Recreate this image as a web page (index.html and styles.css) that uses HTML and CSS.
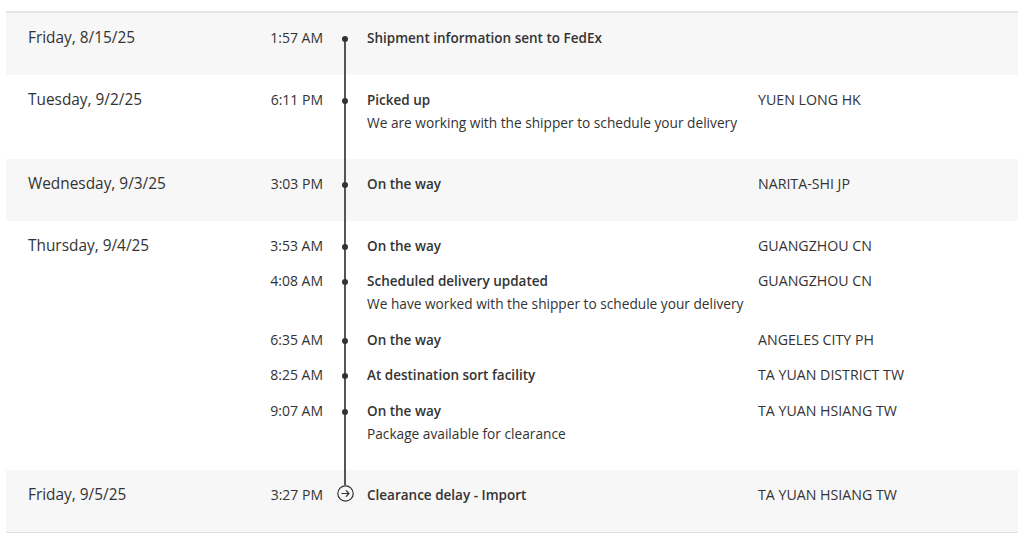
FILE: index.html
```html
<!DOCTYPE html>
<html>
<head>
<meta charset="utf-8">
<link rel="stylesheet" href="styles.css">
</head>
<body>
<div class="history">
  <div class="day shaded">
    <div class="date">Friday, 8/15/25</div>
    <div class="events">
      <div class="event">
        <div class="time">1:57 AM</div>
        <div class="marker"><span class="dot"></span></div>
        <div class="desc"><div class="title">Shipment information sent to FedEx</div></div>
        <div class="loc"></div>
      </div>
    </div>
  </div>
  <div class="day">
    <div class="date">Tuesday, 9/2/25</div>
    <div class="events">
      <div class="event">
        <div class="time">6:11 PM</div>
        <div class="marker"><span class="dot"></span></div>
        <div class="desc"><div class="title">Picked up</div><div class="sub">We are working with the shipper to schedule your delivery</div></div>
        <div class="loc">YUEN LONG HK</div>
      </div>
    </div>
  </div>
  <div class="day shaded">
    <div class="date">Wednesday, 9/3/25</div>
    <div class="events">
      <div class="event">
        <div class="time">3:03 PM</div>
        <div class="marker"><span class="dot"></span></div>
        <div class="desc"><div class="title">On the way</div></div>
        <div class="loc">NARITA-SHI JP</div>
      </div>
    </div>
  </div>
  <div class="day">
    <div class="date">Thursday, 9/4/25</div>
    <div class="events">
      <div class="event">
        <div class="time">3:53 AM</div>
        <div class="marker"><span class="dot"></span></div>
        <div class="desc"><div class="title">On the way</div></div>
        <div class="loc">GUANGZHOU CN</div>
      </div>
      <div class="event">
        <div class="time">4:08 AM</div>
        <div class="marker"><span class="dot"></span></div>
        <div class="desc"><div class="title">Scheduled delivery updated</div><div class="sub">We have worked with the shipper to schedule your delivery</div></div>
        <div class="loc">GUANGZHOU CN</div>
      </div>
      <div class="event">
        <div class="time">6:35 AM</div>
        <div class="marker"><span class="dot"></span></div>
        <div class="desc"><div class="title">On the way</div></div>
        <div class="loc">ANGELES CITY PH</div>
      </div>
      <div class="event">
        <div class="time">8:25 AM</div>
        <div class="marker"><span class="dot"></span></div>
        <div class="desc"><div class="title">At destination sort facility</div></div>
        <div class="loc">TA YUAN DISTRICT TW</div>
      </div>
      <div class="event">
        <div class="time">9:07 AM</div>
        <div class="marker"><span class="dot"></span></div>
        <div class="desc"><div class="title">On the way</div><div class="sub">Package available for clearance</div></div>
        <div class="loc">TA YUAN HSIANG TW</div>
      </div>
    </div>
  </div>
  <div class="day shaded last">
    <div class="date">Friday, 9/5/25</div>
    <div class="events">
      <div class="event">
        <div class="time">3:27 PM</div>
        <div class="marker">
          <svg class="arrow-icon" width="17" height="17" viewBox="0 0 17 17"><circle cx="8.5" cy="8.5" r="7.7" fill="#f7f7f7" stroke="#333" stroke-width="1.2"/><path d="M4.8 8.5h7M9.2 5.7l2.8 2.8-2.8 2.8" fill="none" stroke="#333" stroke-width="1.2" stroke-linecap="round" stroke-linejoin="round"/></svg>
        </div>
        <div class="desc"><div class="title">Clearance delay - Import</div></div>
        <div class="loc">TA YUAN HSIANG TW</div>
      </div>
    </div>
  </div>
</div>
</body>
</html>
```
FILE: styles.css
```css
html, body {
  margin: 0;
  padding: 0;
  background: #fff;
}
body {
  padding: 11px 6px 0 6px;
  font-family: "Open Sans", "Noto Sans", sans-serif;
  color: #333;
  font-size: 13.7px;
}
.history {
  position: relative;
  border-top: 2px solid #e6e6e6;
  border-bottom: 1px solid #dedede;
}
.history::before {
  content: "";
  position: absolute;
  left: 338px;
  top: 27px;
  bottom: 47px;
  width: 2px;
  background: #555;
}
.day {
  display: flex;
  padding: 14px 0 0 22px;
}
.day.shaded {
  background: #f7f7f7;
}
.date {
  width: 222px;
  flex: none;
  font-size: 15.4px;
  line-height: 22px;
}
.events {
  flex: 1;
  display: flex;
  flex-direction: column;
}
.event {
  display: grid;
  grid-template-columns: 73px 44px 391px 1fr;
  padding-bottom: 13.5px;
}
.day .event:last-child {
  padding-bottom: 25.5px;
}
.time {
  text-align: right;
  line-height: 22px;
  font-size: 14px;
}
.marker {
  height: 22px;
  display: flex;
  align-items: center;
  justify-content: center;
  position: relative;
  z-index: 1;
}
.dot {
  width: 6px;
  height: 6px;
  border-radius: 50%;
  background: #333;
  margin-top: 2px;
}
.arrow-icon {
  display: block;
  margin-bottom: 3px;
}
.title {
  font-weight: 600;
  font-size: 13.5px;
  line-height: 22px;
}
.sub {
  line-height: 23px;
}
.loc {
  line-height: 22px;
  font-size: 14.2px;
}
```
